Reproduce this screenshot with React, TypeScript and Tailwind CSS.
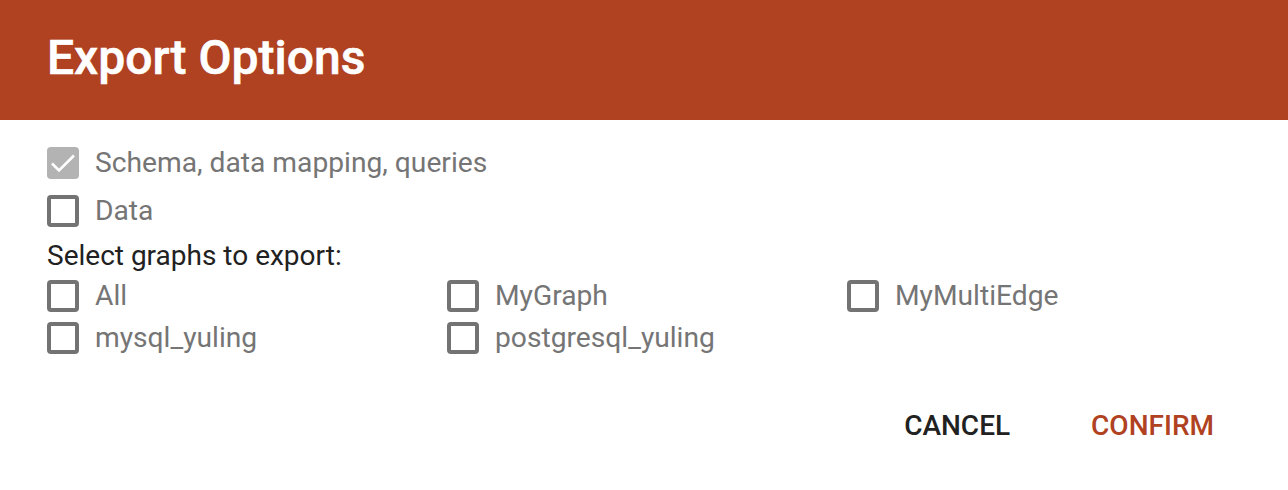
import React from "react";

function Box({ checked }: { checked?: boolean }) {
  if (checked) {
    return (
      <div className="w-[32px] h-[32px] rounded-[4px] bg-[#b3b3b3] flex items-center justify-center shrink-0">
        <svg width="32" height="32" viewBox="0 0 32 32" fill="none">
          <path d="M5 16.5l7 7L27 8.5" stroke="#ffffff" strokeWidth="2.6" />
        </svg>
      </div>
    );
  }
  return <div className="w-[32px] h-[32px] rounded-[4px] border-[4px] border-[#737373] shrink-0" />;
}

function Item({ label, checked }: { label: string; checked?: boolean }) {
  return (
    <div className="flex items-center gap-[16px]">
      <Box checked={checked} />
      <span className="text-[28.2px] text-[#757575] leading-none">{label}</span>
    </div>
  );
}

export default function App() {
  return (
    <div className="w-[1288px] h-[490px] bg-white" style={{ fontFamily: "Roboto, 'Liberation Sans', sans-serif" }}>
      <div className="h-[120px] bg-[#b04121] flex items-center px-[47px]">
        <h1 className="text-white text-[48px] font-medium leading-none pb-[4px] [-webkit-text-stroke:0.6px_white]">Export Options</h1>
      </div>
      <div className="px-[47px] pt-[27px]">
        <Item label="Schema, data mapping, queries" checked />
        <div className="mt-[16px]">
          <Item label="Data" />
        </div>
        <div className="mt-[15px] text-[28px] text-[#212121] leading-none">Select graphs to export:</div>
        <div className="grid grid-cols-[400px_400px_400px] gap-y-[10px] mt-[10px]">
          <Item label="All" />
          <Item label="MyGraph" />
          <Item label="MyMultiEdge" />
          <Item label="mysql_yuling" />
          <Item label="postgresql_yuling" />
        </div>
      </div>
      <div className="flex justify-end pr-[74px] mt-[58px] gap-[81px]">
        <button className="text-[28px] font-medium text-[#212121] leading-none">CANCEL</button>
        <button className="text-[28px] font-medium text-[#b04121] leading-none">CONFIRM</button>
      </div>
    </div>
  );
}
